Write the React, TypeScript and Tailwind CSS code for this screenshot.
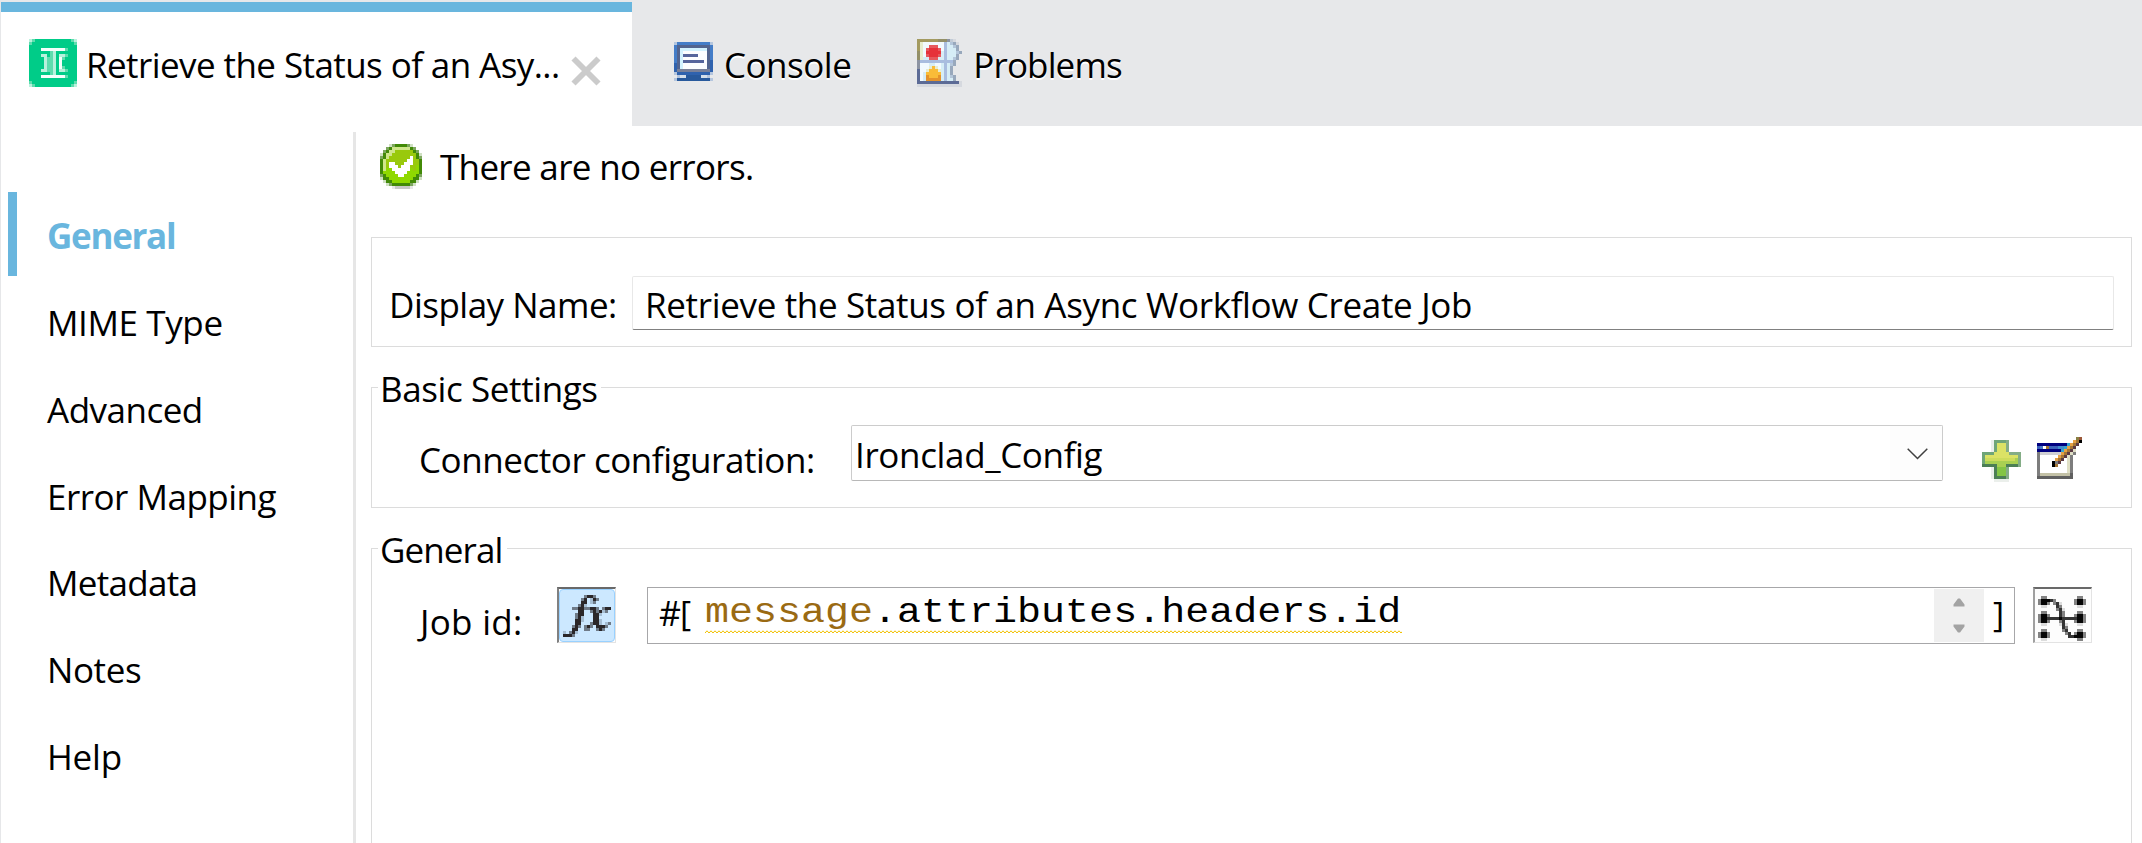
import type { ReactNode } from "react";

type Palette = Record<string, string>;

/** Draws a small bitmap icon, one character per cell, each cell three pixels wide. */
function PixelIcon({ rows, palette, className = "" }: { rows: string[]; palette: Palette; className?: string }) {
  const width = Math.max(...rows.map((r) => r.length));
  return (
    <svg
      width={width * 3}
      height={rows.length * 3}
      viewBox={`0 0 ${width} ${rows.length}`}
      shapeRendering="crispEdges"
      className={`block shrink-0 ${className}`}
      aria-hidden="true"
    >
      {rows.flatMap((row, y) =>
        row.split("").map((c, x) =>
          palette[c] ? <rect key={`${x}-${y}`} x={x} y={y} width={1} height={1} fill={palette[c]} /> : null,
        ),
      )}
    </svg>
  );
}

const connectorIcon = [
  "lmGGGGGGGGGGGGml",
  "mGGGGGGGGGGGGGGm",
  "GGGGGGGGGGGGGGGG",
  "GGGGWWWWWWWWmGGG",
  "GGGGGGGmlGGGGGGG",
  "GGGGllGmlGllmGGG",
  "GGGGGlmmlGWmGGGG",
  "GGGGGlmmlGWGGGGG",
  "GGGGGlmmlGWGGGGG",
  "GGGGGlmmlGWmGGGG",
  "GGGGllmmlGllmGGG",
  "GGGGGGGmlGGGGGGG",
  "GGGGWWWWWWWWmGGG",
  "GGGGGGGGGGGGGGGG",
  "mGGGGGGGGGGGGGGm",
  "lmGGGGGGGGGGGGml",
];
const connectorPalette: Palette = { G: "#00cc88", l: "#b8f1dc", m: "#5fdcae", W: "#f4fffb" };

const consoleIcon = [
  "lBBBBBBBBBBBl",
  "BsssssssssssB",
  "BscccccccccsB",
  "BscWWWWWWWWsB",
  "BscdddddWWWsB",
  "BscWWWWWWWWsB",
  "BscdddddddWsb",
  "bscWWWWWWWWsb",
  "bscWWWWWWWWsb",
  "bgggggggggggb",
  "lbbbbbbbbbbbl",
  ".lwwkkkkkwwl.",
  "lkkkkkkkkkkkl",
];
const consolePalette: Palette = {
  l: "#b5c6de", B: "#447dc8", b: "#2f62ae", s: "#52648f", c: "#d2f2ff",
  W: "#fcfdff", d: "#56659c", g: "#788099", w: "#d5dfeb", k: "#28599c",
};

const problemsIcon = [
  "ooooooopppqgl..",
  "oywwwwwwwbcefl.",
  "oywwrrrwwbccef.",
  "oywrRRRrwbcccf.",
  "pywRRRRRcbcccef",
  "pywrRRRrcbcccf.",
  "pyccrrrccbccef.",
  "qbbbbbbbbbbbf..",
  "qwwwccwwcbcef..",
  "qwwwyYywcbcf...",
  "swwyYYYycbcf...",
  "swcYYYYYcbcf...",
  "swcOYYYOcbcef..",
  "swcOOOOOcbccf..",
  "ssssssssssssssl",
  "lllllllllllllll",
];
const problemsPalette: Palette = {
  o: "#a39a60", p: "#938f68", q: "#8c93a2", s: "#5c6b96", y: "#e8edcf", w: "#f2faff",
  c: "#d6edf6", b: "#a9bddf", e: "#b4c6da", f: "#98a8bc", g: "#c2cbd6", l: "#d6d9df",
  r: "#e65a5e", R: "#e6323a", Y: "#f9bc38", O: "#e5932b",
};

const okIcon = [
  "...sdDDDDds...",
  "..dDhhhhhhDd..",
  ".dDhhaaaaaaDd.",
  "sDhhaaaaaaaaDs",
  "dDhaaaaaaaWaDd",
  "DhaaaaaaaWWaaD",
  "DhaWWaaaWWWaaD",
  "DhaWWWaWWWaabD",
  "DhbbWWWWWWbabD",
  "DbbbbWWWWbbbbD",
  "dDbbbbWWbbbbDd",
  "sDDbbbbbbbbDDs",
  ".sDDbbbbbbDDs.",
  "..sdDDDDDDds..",
  "....lgggggl...",
];
const okPalette: Palette = {
  s: "#cfe0c2", d: "#7da75e", D: "#428a07", h: "#cfe68a", a: "#99c90c", b: "#8fd800", W: "#ffffff",
  g: "#c8c8c8", l: "#e8e8e8",
};

const plusIcon = [
  "...lggggG....",
  "...lgyyyG....",
  "...lgyyyG....",
  "...lgyyyG....",
  "ggggyyyyyGGGG",
  "gyyyyyyyyyyyG",
  "gccccccccccvG",
  "gvvvvvvvvvvvG",
  "dddddvvvddddG",
  "...ldkkkG....",
  "...ldkkkG....",
  "...ldkkkG....",
  "...lddddG....",
  "....lllll....",
];
const plusPalette: Palette = {
  g: "#6fa577", G: "#84ad86", d: "#4c7f55", y: "#dbe265", c: "#cddc5c", v: "#a9d052", k: "#83c544", l: "#ebefeb",
};

const editIcon = [
  ".............vr",
  "............otK",
  "NNNNNNNNNNcotm.",
  "bBWtbbbCCcotm..",
  "NNNNNNNNcotme..",
  "glllllllotmeg..",
  "gWWWWWWotmeg...",
  "gWWWWWotmWeg...",
  "gWWWWKgmWWeg...",
  "gWWWWKtWWWeg...",
  "gWWWWWWWWWeg...",
  "gWWWWWWWWWeg...",
  "gnnnnnnnnnnd...",
  "dddddddddddd...",
];
const editPalette: Palette = {
  N: "#00007f", b: "#3d62bb", B: "#4a78c8", C: "#418ccc", c: "#36a2cf", t: "#a37535", W: "#ffffff",
  o: "#e6a043", m: "#5b3943", v: "#8a8043", r: "#9a5738", K: "#000000", g: "#7d7d7d", l: "#cfcfd3",
  e: "#dfdfc5", n: "#c3c1a6", d: "#606060",
};

const functionIcon = [
  ".......gKKg.....",
  "......gK.lKg....",
  "......KK.lg.....",
  ".....gKl........",
  "...ggKKggKKg.gKK",
  ".....KK..gKgKlg.",
  "....gKK...KKl...",
  "....gKl...KK....",
  "....KKl...KKl...",
  "....KK...gKKl.lg",
  "...gKg.gKg.KKKg.",
  "...KK..gg..gKg..",
  "l.gKl...........",
  "KKKg............",
];
const functionPalette: Palette = { K: "#2b2729", g: "#6f7b88", l: "#a5bdd2" };

const mappingIcon = [
  ".gg..........gg.",
  "gKKKdg......gKKg",
  "gKKg.gdl....gKKg",
  ".ll...dg.....ll.",
  "......gdl.......",
  ".gg....dg....gg.",
  "gKKg...dg...gKKg",
  "gKKddddKdddddKKg",
  "gKKg...gd...gKKg",
  ".ll....ldl...ll.",
  "........dg......",
  ".gg.....gd...gg.",
  "gKKg.....gd.gKKg",
  "gKKg......ddKKKg",
  ".ll..........gg.",
];
const mappingPalette: Palette = { K: "#060606", d: "#353535", g: "#838383", l: "#dcdcdc" };

function Group({ title, className, children }: { title?: ReactNode; className: string; children: ReactNode }) {
  return (
    <section className={`relative border border-[#dcdcdc] ${className}`}>
      {title}
      {children}
    </section>
  );
}

const navItems = [
  { label: "MIME Type", cls: "tracking-[-0.39px]" },
  { label: "Advanced", cls: "tracking-[-0.5px]" },
  { label: "Error Mapping", cls: "tracking-[-0.5px]" },
  { label: "Metadata", cls: "tracking-[-0.7px]" },
  { label: "Notes", cls: "tracking-[-0.4px]" },
  { label: "Help", cls: "tracking-[-0.2px]" },
];

export default function App() {
  return (
    <div className="flex h-[843px] w-[2142px] flex-col overflow-hidden border-l border-[#e6e7e9] bg-white font-['Open_Sans','Noto_Sans',sans-serif] text-[35px] leading-[48px] whitespace-nowrap text-black">
      <header className="flex h-[126px] shrink-0 bg-[#e7e8ea] pt-[2px]">
        <div className="flex w-[631px] items-start border-t-10 border-[#69b6de] bg-white pl-[28px]">
          <PixelIcon rows={connectorIcon} palette={connectorPalette} className="mt-[27px]" />
          <span className="mt-[29px] ml-[9px] w-[480px] tracking-[-0.58px]">Retrieve the Status of an Asy...</span>
          <svg width="30" height="30" viewBox="0 0 30 30" className="mt-[44px] ml-[5px]" aria-label="Close">
            <path d="M2.500 2.500 27.500 27.500M27.500 2.500 2.500 27.500" stroke="#cbcbcb" strokeWidth="5.8" strokeLinecap="butt" />
          </svg>
        </div>
        <div className="flex items-start pl-[42px] [text-shadow:0_2px_0_#ffffff]">
          <PixelIcon rows={consoleIcon} palette={consolePalette} className="mt-[40px]" />
          <span className="mt-[39px] ml-[11px] tracking-[-0.5px]">Console</span>
        </div>
        <div className="flex items-start pl-[66px] [text-shadow:0_2px_0_#ffffff]">
          <PixelIcon rows={problemsIcon} palette={problemsPalette} className="mt-[37px]" />
          <span className="mt-[39px] ml-[11px] tracking-[-0.87px]">Problems</span>
        </div>
      </header>

      <div className="flex min-h-0 flex-1">
        <nav className="w-[352px] shrink-0 pt-[66px]">
          <div className="flex h-[87px] pl-[7px]">
            <div className="h-[84px] w-[9px] bg-[#69b6de]" />
            <span className="mt-[20px] ml-[30px] font-bold tracking-[-1.3px] text-[#69b6de]">General</span>
          </div>
          {navItems.map((item) => (
            <div key={item.label} className={`h-[86.8px] pt-[20px] pl-[46px] ${item.cls}`}>
              {item.label}
            </div>
          ))}
        </nav>
        <div className="mt-[6px] w-[3px] shrink-0 bg-[#e6e6e6]" />

        <main className="ml-[15px] w-[1761px]">
          <div className="flex h-[111px] items-start">
            <PixelIcon rows={okIcon} palette={okPalette} className="mt-[18px] ml-[9px]" />
            <span className="mt-[17px] ml-[18px] tracking-[-0.68px]">There are no errors.</span>
          </div>

          <Group className="flex h-[110px] items-start pt-[38px] pl-[17px]">
            <span className="mt-[5px] w-[243px] tracking-[-0.5px]">Display Name:</span>
            <div className="h-[54px] w-[1482px] rounded-[2px] border border-[#e8e8e8] border-b-[#808080] pt-[4px] pl-[12px] tracking-[-0.34px]">
              Retrieve the Status of an Async Workflow Create Job
            </div>
          </Group>

          <Group
            className="mt-[40px] flex h-[121px] items-start pt-[37px] pl-[47px]"
            title={
              <h2 className="absolute top-[-23px] left-[6px] bg-white pr-[3px] pl-[2px] tracking-[-0.4px]">Basic Settings</h2>
            }
          >
            <span className="mt-[11px] w-[432px] tracking-[-0.45px]">Connector configuration:</span>
            <div className="flex h-[56px] w-[1092px] rounded-[2px] border border-[#cccccc] border-b-[#b8b8b8]">
              <span className="mt-[5px] w-[1038px] pl-[3px] tracking-[-0.36px]">Ironclad_Config</span>
              <div className="flex-1 bg-[#fdfdfd]">
                <svg width="21" height="12" viewBox="0 0 21 12" className="mt-[22px] ml-[17px]" fill="none">
                  <path d="M.7.7 10.5 10.5 20.3.7" stroke="#404040" strokeWidth="1.5" />
                </svg>
              </div>
            </div>
            <PixelIcon rows={plusIcon} palette={plusPalette} className="mt-[15px] ml-[39px]" />
            <PixelIcon rows={editIcon} palette={editPalette} className="mt-[12px] ml-[16px]" />
          </Group>

          <Group
            className="mt-[40px] flex h-[340px] items-start pt-[38px] pl-[46px]"
            title={
              <h2 className="absolute top-[-23px] left-[6px] bg-white pr-[4px] pl-[2px] tracking-[-0.9px]">General</h2>
            }
          >
            <span className="mt-[11px] w-[139px] pl-[2px] tracking-[0.3px]">Job id:</span>
            <button className="flex h-[56px] w-[59px] items-start border-t-2 border-r border-b border-l-2 border-t-[#696969] border-r-[#e3e3e3] border-b-[#e3e3e3] border-l-[#808080] bg-white">
              <span className="flex h-[53px] w-[56px] items-start rounded-[4px] border border-[#99d1ff] bg-[#cce8ff] pt-[5px] pl-[3px]">
                <PixelIcon rows={functionIcon} palette={functionPalette} />
              </span>
            </button>
            <div className="ml-[31px] flex h-[57px] w-[1368px] items-start border border-[#a7a7a9]">
              <span className="w-[57px] pl-[11px] text-[34px] leading-[50px] tracking-[-1px]">#[</span>
              <div className="w-[1229px] pt-[3px]">
                <div className="w-[610px] origin-left scale-x-[1.143] font-['Liberation_Mono',monospace] text-[35px] leading-[45px]">
                  <span className="text-[#9a6a13]">message</span>.attributes.headers.id
                </div>
                <svg width="697" height="4" className="-mt-[6px] block">
                  <defs>
                    <pattern id="squiggle" width="4" height="4" patternUnits="userSpaceOnUse">
                      <path d="M-1 3.5 0 3 2 .8 4 3 5 3.5" fill="none" stroke="#f0c000" strokeWidth="1" />
                    </pattern>
                  </defs>
                  <rect width="697" height="4" fill="url(#squiggle)" />
                </svg>
              </div>
              <div className="mt-[1px] flex h-[53px] w-[50px] flex-col items-center bg-[#f0f0f0]">
                <svg width="12" height="44" viewBox="0 0 12 44" className="mt-[9px]">
                  <path d="M5 .5h2l4.5 6V8.500H.5V6.500ZM5 34.500h2l4.500-6V26.500H.500v2Z" fill="#a3a3a3" />
                </svg>
              </div>
              <span className="pt-[1px] pl-[9px] text-[34px] leading-[50px]">]</span>
            </div>
            <button className="ml-[18px] h-[56px] w-[59px] border-t-2 border-r border-b border-l-2 border-t-[#696969] border-r-[#e3e3e3] border-b-[#e3e3e3] border-l-[#a0a0a0] bg-[#fdfdfd] pt-[6px] pl-[3px]">
              <PixelIcon rows={mappingIcon} palette={mappingPalette} />
            </button>
          </Group>
        </main>
      </div>
    </div>
  );
}
